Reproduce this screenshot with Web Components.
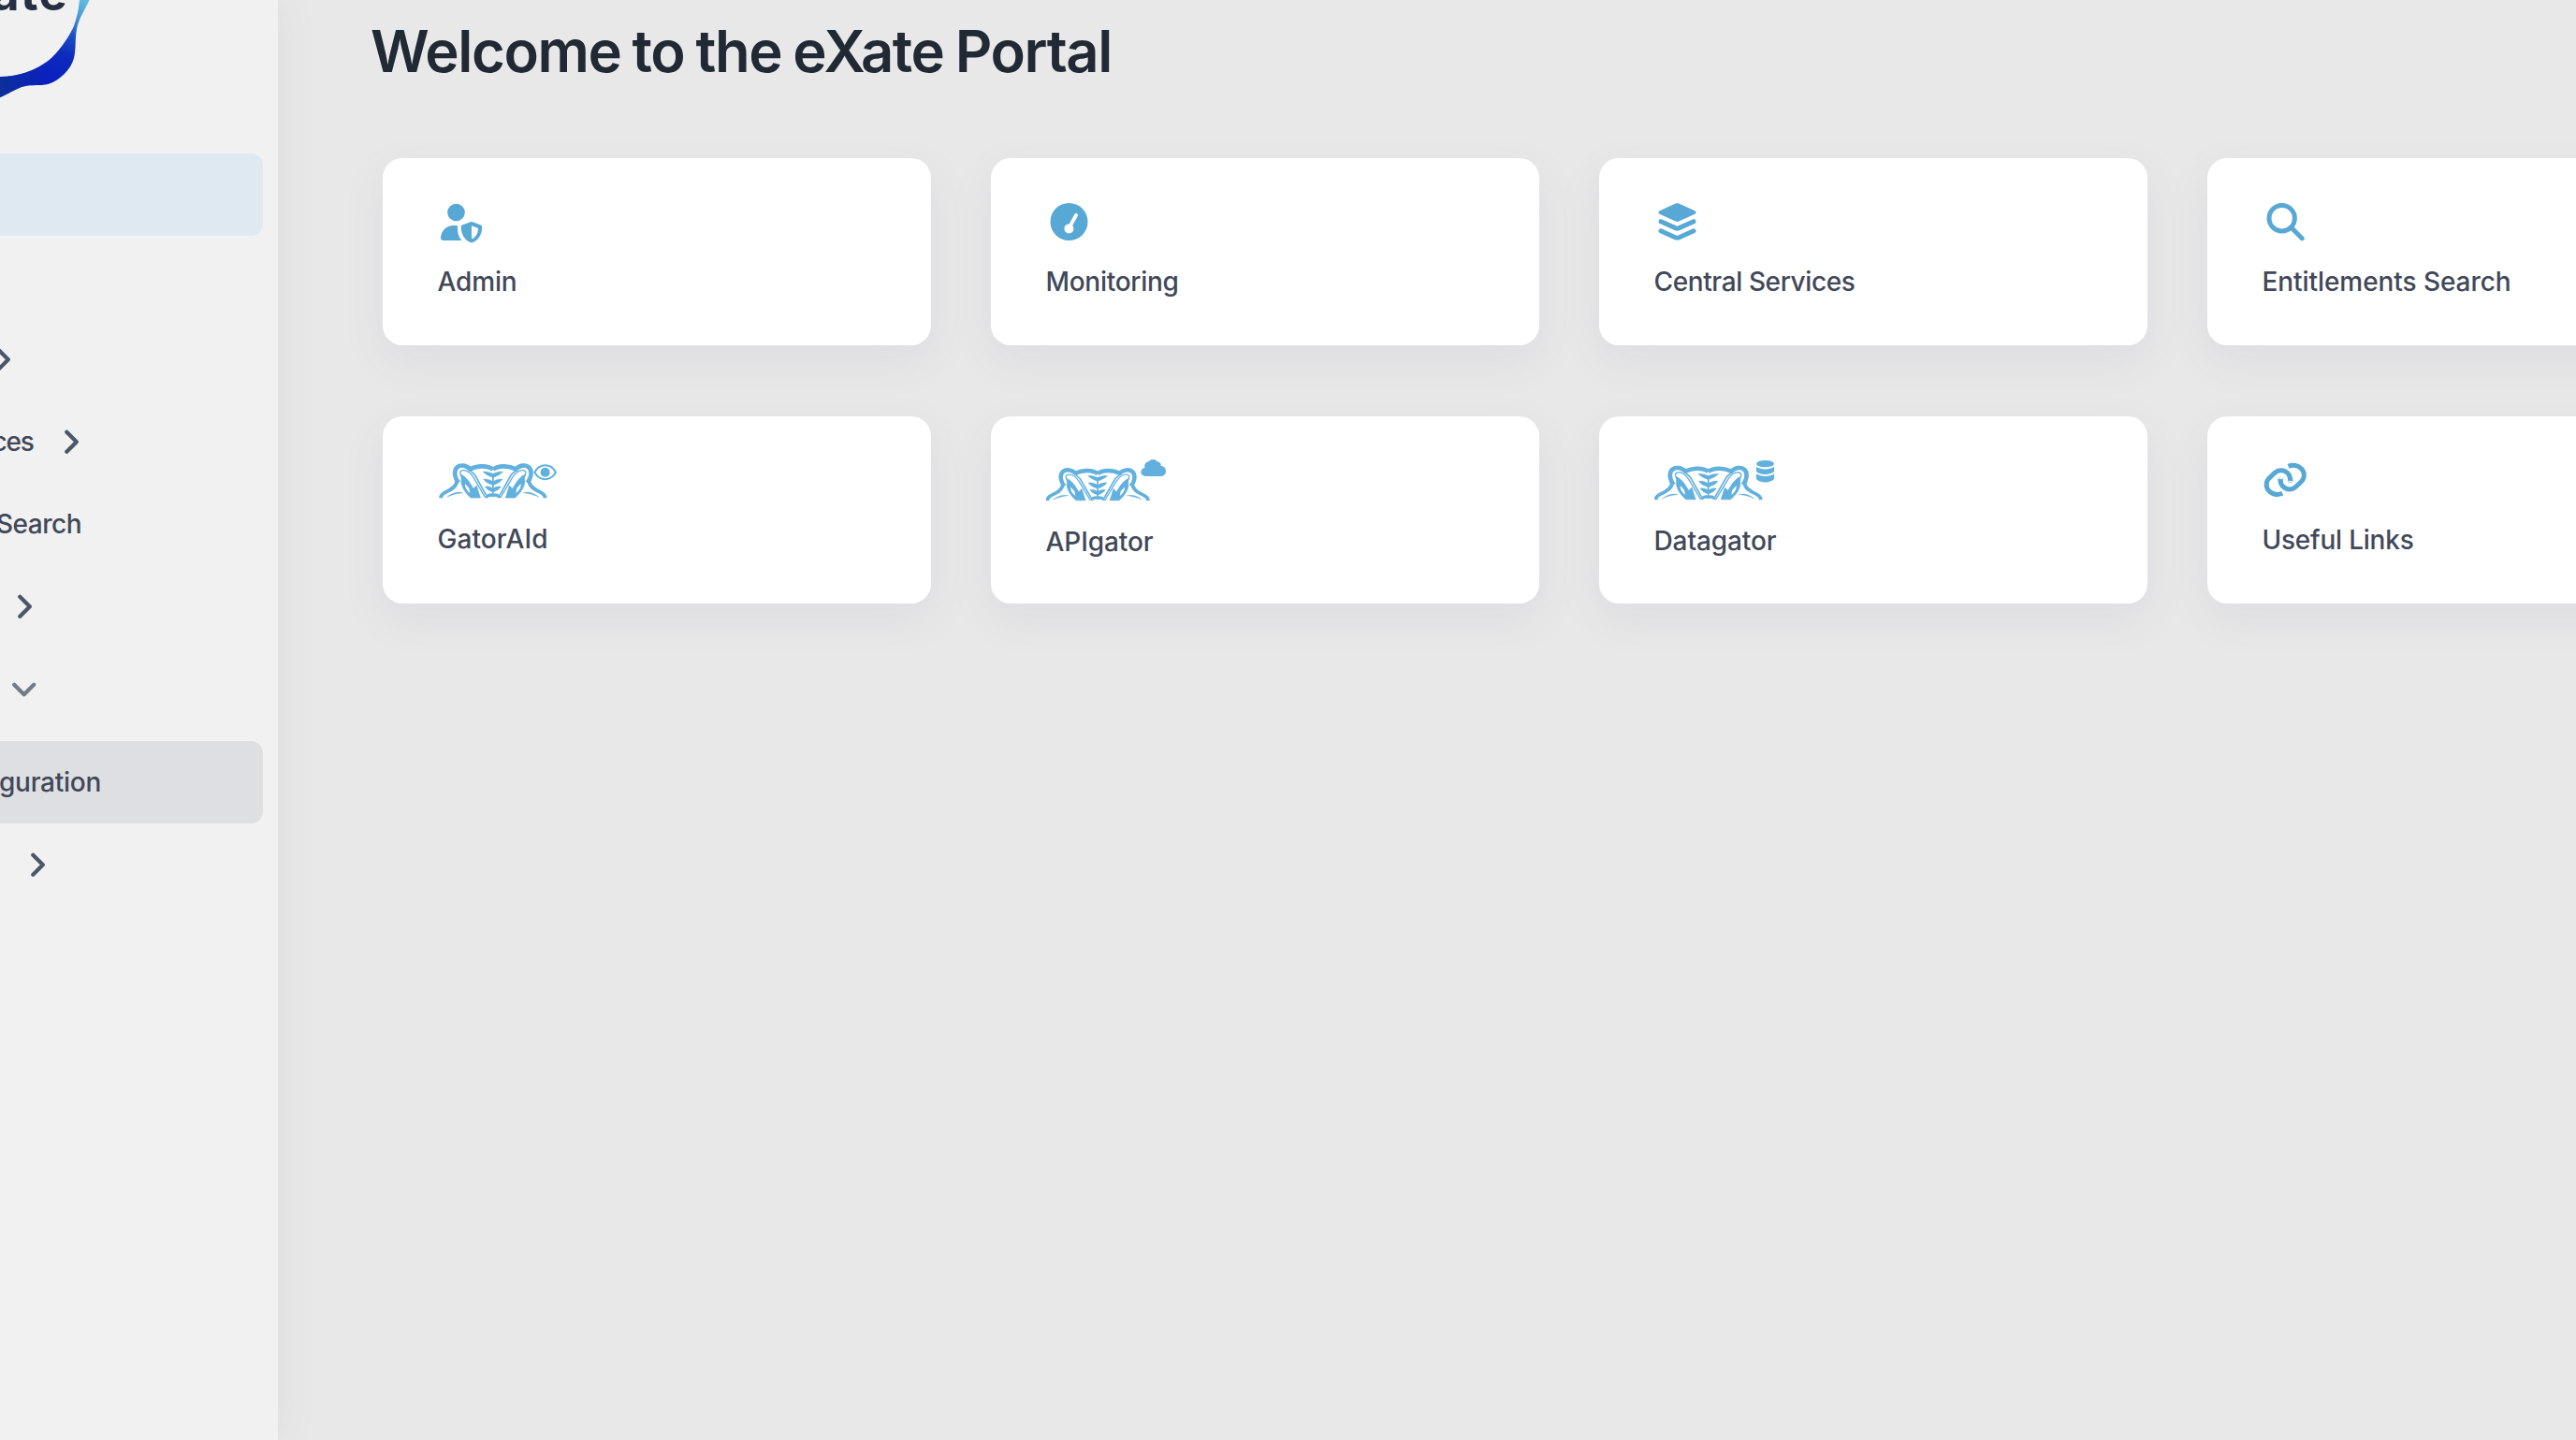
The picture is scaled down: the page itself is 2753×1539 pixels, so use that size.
<!DOCTYPE html>
<html lang="en">
<head>
<meta charset="utf-8">
<title>eXate Portal</title>
<style>
    html, body {
        margin: 0;
        height: 100%;
        overflow: hidden;
    }
    body {
        background: #e8e8e8;
        color: #414859;
        font-family: Inter, "Liberation Sans", sans-serif;
        font-size: 28px;
        font-weight: 450;
    }
</style>
</head>
<body>
<portal-app></portal-app>

<script>
// one half of the gator head, mirrored around x = 260.5
const gatorHalf = `
    <path d="M93 187C94 178 100 172 109 168C126 160 143 151 145 133" stroke-width="11.500"/>
    <path d="M113 184C128 171 147 165 164 170C146 172 128 176 113 184Z" fill="currentColor" stroke-width="1"/>
    <path d="M150 138C137 121 134 99 146 88C156 79 175 81 187 94C207 84 241 80 260.500 95" stroke-width="14"/>
    <path d="M163 122C152 109 154 99 164 98C177 96 187 105 197 119L236 185" stroke-width="4"/>
    <path d="M180 92L202 112L239 178" stroke-width="5"/>
    <path d="M159 112C170 117 181 128 190 144L198 157L208 147L213 164L220 186H190C176 175 163 158 159 139Z" fill="currentColor" stroke-width="2"/>
    <path d="M171 141C170 153 177 164 187 171L184 155Z" fill="#fff" stroke="none"/>
    <path d="M228 102C240 101 252 104 262 110V122C252 117 239 115 228 102Z" fill="currentColor" stroke-width="1"/>
    <path d="M230 126C242 125 253 129 262 135V146C252 142 239 140 230 126Z" fill="currentColor" stroke-width="1"/>
    <path d="M235 150C246 148 255 152 262 157V168C253 165 243 163 235 150Z" fill="currentColor" stroke-width="1"/>
    <path d="M235 186C239 173 250 171 262 174V183C253 181 247 182 244 186Z" fill="currentColor" stroke-width="1"/>`;

const gator = `
    <g fill="none" stroke="currentColor">
        ${gatorHalf}
        <g transform="matrix(-1 0 0 1 521 0)">${gatorHalf}</g>
        <path d="M260.500 108V178" stroke-width="5"/>
    </g>`;

const wide = body => `<svg width="130" height="45" viewBox="84 63 390 135">${body}</svg>`;
const small = body => `<svg width="50" height="45" viewBox="0 -2 50 45" fill="none" stroke="currentColor" stroke-width="5" stroke-linecap="round" stroke-linejoin="round">${body}</svg>`;

const icons = {
    admin: small(`
        <g fill="currentColor" stroke="none">
            <circle cx="19.500" cy="10" r="9.300"/>
            <path d="M3 37.500C3 30 9 23.900 16.500 23.900H21C20.600 31 22 36.500 25.500 40H5.500C4 40 3 39 3 37.500Z"/>
            <path fill-rule="evenodd" d="M34.600 20.200C35.400 19.900 36.400 19.900 37.200 20.200L45.800 23.500C46.700 23.900 47.200 24.600 47.200 25.600C47.200 33 44 39.400 37.300 42C36.400 42.300 35.500 42.300 34.600 42C28 39.300 24.700 33 24.700 25.600C24.700 24.600 25.200 23.900 26.100 23.500ZM36 24.300V38.600C41 36.200 43 31.800 43 27Z"/>
        </g>`),
    monitoring: small(`
        <circle cx="24.500" cy="20" r="20" fill="currentColor" stroke="none"/>
        <circle cx="24.400" cy="27.400" r="5" fill="#fff" stroke="none"/>
        <path d="M26 24L32 13" stroke="#fff" stroke-width="3.800"/>`),
    services: small(`
        <path d="M22.700 .5C23.900 0 25.100 0 26.300 .5L43.300 8.300C45 9.100 45 10.900 43.300 11.700L26.300 19.600C25.100 20.100 23.900 20.100 22.700 19.600L5.700 11.700C4 10.900 4 9.100 5.700 8.300Z" fill="currentColor" stroke="none"/>
        <path d="M7 19.700L23 26.900Q24.500 27.500 26 26.900L42 19.700M7 29.800L23 37Q24.500 37.600 26 37L42 29.800" stroke-width="5"/>`),
    search: small(`
        <circle cx="20.700" cy="16.200" r="13.700"/>
        <path d="M31 26.500L42.200 37.700"/>`),
    links: small(`
        <g stroke-linecap="butt">
            <path d="M21.300 34.200C16 36.300 10.500 35.300 7 31.800C3.200 27.900 3.200 21.900 7 18.100L13 12.400C17 8.700 23 8.900 26.700 12.600C28.900 14.900 29.900 17.500 29.700 20.800"/>
            <path d="M27.600 5.400C32.500 3.300 38 4.300 41.600 7.900C45.300 11.700 45.300 17.700 41.600 21.500L35.600 27.300C31.600 31 25.700 30.900 21.900 27.100C19.700 24.900 18.900 22 19.200 18.900"/>
        </g>
        <circle cx="29.700" cy="20.300" r=".2"/>
        <circle cx="19.200" cy="19.400" r=".2"/>`),
    gatoraid: wide(`${gator}
        <path d="M394 104C410 74 446 74 462 104C446 134 410 134 394 104Z" fill="none" stroke="currentColor" stroke-width="6"/>
        <circle cx="428" cy="104" r="15" fill="currentColor"/>`),
    apigator: wide(`
        <g transform="translate(-3 19) scale(.968 .942)">${gator}</g>
        <path d="M403 117C393 117 387 110 388 102C389 95 394 91 400 90C398 78 405 70 414 70C418 62 434 60 440 70C448 70 453 76 452 84C461 84 468 91 468 100C468 110 462 117 453 117Z" fill="currentColor"/>`),
    datagator: wide(`
        <g transform="translate(-5 9) scale(1.006 .98)">${gator}</g>
        <g fill="currentColor">
            <ellipse cx="439.500" cy="77" rx="28.500" ry="11"/>
            <path d="M411 86C424 97 455 97 468 86V102C457 114 422 114 411 102Z"/>
            <path d="M411 109C424 120 455 120 468 109V126C457 140 422 140 411 126Z"/>
        </g>`)
};

// Keeps a label at the measure given in its "width" attribute by tracking.
class FitLabel extends HTMLElement {
    constructor() {
        super();
        this.attachShadow({ mode: 'open' });
        this.shadowRoot.innerHTML = `
            <style>
                :host { display: block; white-space: nowrap; }
                span { display: inline-block; }
            </style>
            <span><slot></slot></span>
        `;
    }

    connectedCallback() {
        const span = this.shadowRoot.querySelector('span');
        const width = Number(this.getAttribute('width'));
        const natural = span.getBoundingClientRect().width;
        span.style.letterSpacing = `${(width - natural) / this.textContent.length}px`;
    }
}

class PortalLogo extends HTMLElement {
    constructor() {
        super();
        this.attachShadow({ mode: 'open' });
        this.shadowRoot.innerHTML = `
            <style>
                :host { display: block; height: 164px; }
                svg { display: block; }
                text { font: 700 51px Inter, sans-serif; fill: #243042; }
            </style>
            <svg width="120" height="120" viewBox="0 0 120 120">
                <defs>
                    <linearGradient id="ribbon" gradientUnits="userSpaceOnUse" x1="92" y1="0" x2="58" y2="88">
                        <stop offset="0" stop-color="#62bce0"/>
                        <stop offset=".2" stop-color="#4a9dd6"/>
                        <stop offset=".42" stop-color="#1f52c4"/>
                        <stop offset=".65" stop-color="#0d2cbd"/>
                        <stop offset="1" stop-color="#0a1fc0"/>
                    </linearGradient>
                    <linearGradient id="base" gradientUnits="userSpaceOnUse" x1="0" y1="0" x2="52" y2="0">
                        <stop offset="0" stop-color="#0d2f9a"/>
                        <stop offset="1" stop-color="#0d2f9a" stop-opacity="0"/>
                    </linearGradient>
                </defs>
                <path fill="url(#ribbon)" d="M85 0C84 10 82 20 78.500 29C71 44 62 56 52 64.500C38 75 20 82 0 82V104C8 101 16 95 25 92.500C34 90 43 92 51 90C64 86 76 74 79 62C81.500 52 80 42 82 31C84 20 90 12 95.500 0Z"/>
                <path fill="url(#base)" d="M52 64.500C38 75 20 82 0 82V104C8 101 16 95 25 92.500C34 90 43 92 51 90Z"/>
                <text x="-9" y="10.800" textLength="81">ate</text>
            </svg>
        `;
    }
}

class NavItem extends HTMLElement {
    constructor() {
        super();
        this.attachShadow({ mode: 'open' });
        this.shadowRoot.innerHTML = `
            <style>
                :host {
                    display: flex;
                    align-items: center;
                    justify-content: flex-end;
                    gap: 28.5px;
                    box-sizing: border-box;
                    height: 88px;
                    margin-right: 16px;
                    border-radius: 0 13px 13px 0;
                }
                :host([active]) { background: #dfe9f1; }
                :host([selected]) { background: #dedfe3; margin-top: 12px; }
                svg { display: none; flex: none; color: #4d5669; }
                :host([arrow]) svg { display: block; }
                :host([arrow="down"]) svg { transform: translateY(1.5px) rotate(90deg); color: #737c87; }
            </style>
            <slot></slot>
            <svg width="26" height="26" viewBox="0 0 26 26" fill="none" stroke="currentColor" stroke-width="4.200" stroke-linecap="round" stroke-linejoin="round">
                <path d="M7.300 2.800L17.800 13.300L7.300 23.800"/>
            </svg>
        `;
    }

    connectedCallback() {
        this.style.paddingRight = `${this.getAttribute('inset') || 0}px`;
    }
}

class PortalSidebar extends HTMLElement {
    constructor() {
        super();
        this.attachShadow({ mode: 'open' });
        this.shadowRoot.innerHTML = `
            <style>
                :host {
                    display: block;
                    flex: none;
                    width: 297px;
                    background: #f1f1f1;
                    box-shadow: 0 0 42px rgba(90, 95, 125, 0.08);
                }
                nav { display: flex; flex-direction: column; }
                .spacer { height: 88px; }
            </style>
            <portal-logo></portal-logo>
            <nav>
                <nav-item active></nav-item>
                <div class="spacer"></div>
                <nav-item arrow="right" inset="264"></nav-item>
                <nav-item arrow="right" inset="191"><fit-label width="44">ces</fit-label></nav-item>
                <nav-item inset="194"><fit-label width="91">Search</fit-label></nav-item>
                <nav-item arrow="right" inset="241"></nav-item>
                <nav-item arrow="down" inset="242"></nav-item>
                <nav-item selected inset="173"><fit-label width="109">guration</fit-label></nav-item>
                <nav-item arrow="right" inset="227"></nav-item>
            </nav>
        `;
    }
}

class PortalCard extends HTMLElement {
    constructor() {
        super();
        this.attachShadow({ mode: 'open' });
        this.shadowRoot.innerHTML = `
            <style>
                :host {
                    display: flex;
                    flex-direction: column;
                    align-items: flex-start;
                    box-sizing: border-box;
                    height: 200px;
                    padding: 46px 58.5px 0;
                    border-radius: 21px;
                    background: #fff;
                    box-shadow: 0 16px 48px rgba(90, 95, 135, 0.08);
                }
                .icon { height: 45px; color: #58a8d6; }
                .icon.wide { color: #62b0de; }
                svg { display: block; }
                .label { margin-top: var(--label-gap, 23px); line-height: 36px; }
            </style>
            <div class="icon"></div>
            <div class="label"><slot></slot></div>
        `;
    }

    connectedCallback() {
        const name = this.getAttribute('icon');
        const icon = this.shadowRoot.querySelector('.icon');
        icon.innerHTML = icons[name];
        icon.classList.toggle('wide', name.includes('gator'));
    }
}

class PortalApp extends HTMLElement {
    constructor() {
        super();
        this.attachShadow({ mode: 'open' });
        this.shadowRoot.innerHTML = `
            <style>
                :host { display: flex; height: 100vh; overflow: hidden; }
                portal-sidebar { z-index: 1; }
                main { flex: 1; min-width: 0; padding-left: 99px; }
                h1 {
                    margin: 0;
                    padding-top: 15px;
                    font-size: 61.5px;
                    font-weight: 570;
                    line-height: 80px;
                    word-spacing: -2px;
                    color: #212934;
                }
                .cards {
                    display: grid;
                    grid-template-columns: repeat(4, 586px);
                    gap: 76px 64px;
                    padding: 74px 0 0 13px;
                }
            </style>
            <portal-sidebar></portal-sidebar>
            <main>
                <h1><fit-label width="792">Welcome to the eXate Portal</fit-label></h1>
                <div class="cards">
                    <portal-card icon="admin"><fit-label width="85">Admin</fit-label></portal-card>
                    <portal-card icon="monitoring"><fit-label width="142">Monitoring</fit-label></portal-card>
                    <portal-card icon="services"><fit-label width="215">Central Services</fit-label></portal-card>
                    <portal-card icon="search"><fit-label width="266">Entitlements Search</fit-label></portal-card>
                    <portal-card icon="gatoraid" style="--label-gap: 21.5px"><fit-label width="118">GatorAId</fit-label></portal-card>
                    <portal-card icon="apigator" style="--label-gap: 24.5px"><fit-label width="115">APIgator</fit-label></portal-card>
                    <portal-card icon="datagator" style="--label-gap: 24px"><fit-label width="131">Datagator</fit-label></portal-card>
                    <portal-card icon="links"><fit-label width="162">Useful Links</fit-label></portal-card>
                </div>
            </main>
        `;
    }
}

customElements.define('fit-label', FitLabel);
customElements.define('portal-logo', PortalLogo);
customElements.define('nav-item', NavItem);
customElements.define('portal-sidebar', PortalSidebar);
customElements.define('portal-card', PortalCard);
customElements.define('portal-app', PortalApp);
</script>
</body>
</html>
